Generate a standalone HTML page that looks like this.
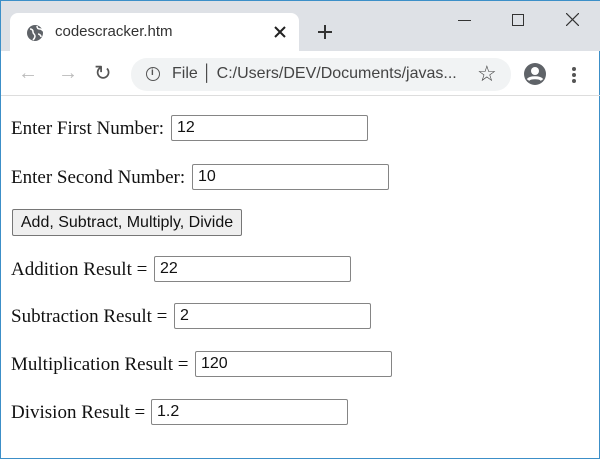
<!DOCTYPE html>
<html><head><style>
*{box-sizing:border-box;margin:0;padding:0}
body{width:600px;height:459px;overflow:hidden;background:#fff;position:relative;font-family:"Liberation Serif",serif;border:1px solid #3c8fc8;}
.abs{position:absolute}
.tabbar{left:0;top:0;width:600px;height:50px;background:#dee1e6}
.tab{left:9px;top:12px;width:289px;height:40px;background:#fff;border-radius:8px 8px 0 0}
.ui{font-family:"Liberation Sans",sans-serif;color:#3c4043}
.lbl{font-size:19px;color:#111;left:10px}
.inp{height:26px;border:1px solid #858585;border-radius:2px;font-family:"Liberation Sans",sans-serif;font-size:16px;padding:3px 5px;line-height:18px;color:#111;background:#fff}
</style></head><body>
<div class="abs tabbar"></div>
<div class="abs tab"></div>
<svg class="abs" style="left:25px;top:23px" width="18" height="18" viewBox="0 0 18 18"><circle cx="9" cy="9" r="8" fill="#5f6368"/><path d="M4 5c2 0 3 1 3 3s2 2 2 4-1 3-2 4M11 2c0 2 1 3 3 3s2 1 3 2M12 10c1 0 3 1 3 3" stroke="#fff" stroke-width="1.5" fill="none"/></svg>
<div class="abs ui" style="left:54px;top:22px;font-size:15px;color:#333">codescracker.htm</div>
<svg class="abs" style="left:273px;top:25px" width="12" height="12" viewBox="0 0 12 12"><path d="M1 1L11 11M11 1L1 11" stroke="#222" stroke-width="2"/></svg>
<svg class="abs" style="left:317px;top:24px" width="14" height="14" viewBox="0 0 14 14"><path d="M7 0V14M0 7H14" stroke="#333" stroke-width="2"/></svg>
<div class="abs" style="left:457px;top:19px;width:13px;height:1px;background:#333"></div>
<div class="abs" style="left:511px;top:13px;width:12px;height:12px;border:1px solid #333"></div>
<svg class="abs" style="left:565px;top:12px" width="13" height="13" viewBox="0 0 13 13"><path d="M0 0L13 13M13 0L0 13" stroke="#333" stroke-width="1.2"/></svg>
<div class="abs ui" style="left:17px;top:61px;font-size:20px;color:#bbb">←</div>
<div class="abs ui" style="left:57px;top:61px;font-size:20px;color:#bbb">→</div>
<div class="abs ui" style="left:93px;top:60px;font-size:21px;color:#555">↻</div>
<div class="abs" style="left:130px;top:57px;width:380px;height:33px;background:#f1f3f4;border-radius:16px"></div>
<div class="abs" style="left:145px;top:66px;width:14px;height:14px;border:1.5px solid #555;border-radius:50%"></div>
<div class="abs ui" style="left:150px;top:66px;font-size:10px;font-weight:bold;color:#555">i</div>
<div class="abs ui" style="left:171px;top:64px;font-size:16px;color:#444">File │ C:/Users/DEV/Documents/javas...</div>
<div class="abs ui" style="left:476px;top:60px;font-size:22px;color:#444">☆</div>
<svg class="abs" style="left:522px;top:61px" width="24" height="24" viewBox="0 0 24 24"><circle cx="12" cy="12" r="11" fill="#5f6368"/><circle cx="12" cy="9" r="4" fill="#fff"/><path d="M5 18c2-3 12-3 14 0" stroke="#fff" stroke-width="3" fill="none"/></svg>
<div class="abs" style="left:571px;top:66px;width:4px;height:4px;border-radius:2px;background:#555;box-shadow:0 6px #555,0 12px #555"></div>
<div class="abs" style="left:0;top:94px;width:600px;height:1px;background:#ddd"></div>

<div class="abs lbl" style="top:117px">Enter First Number:</div>
<div class="abs inp" style="left:170px;top:114px;width:197px">12</div>
<div class="abs lbl" style="top:166px">Enter Second Number:</div>
<div class="abs inp" style="left:191px;top:163px;width:197px">10</div>
<div class="abs" style="left:11px;top:208px;width:230px;height:27px;border:1px solid #767676;border-radius:2px;background:#efefef;font-family:'Liberation Sans',sans-serif;font-size:16px;text-align:center;line-height:25px;color:#111">Add, Subtract, Multiply, Divide</div>
<div class="abs lbl" style="top:258px">Addition Result =</div>
<div class="abs inp" style="left:153px;top:255px;width:197px">22</div>
<div class="abs lbl" style="top:305px">Subtraction Result =</div>
<div class="abs inp" style="left:173px;top:302px;width:197px">2</div>
<div class="abs lbl" style="top:353px">Multiplication Result =</div>
<div class="abs inp" style="left:194px;top:350px;width:197px">120</div>
<div class="abs lbl" style="top:401px">Division Result =</div>
<div class="abs inp" style="left:150px;top:398px;width:197px">1.2</div>
</body></html>
